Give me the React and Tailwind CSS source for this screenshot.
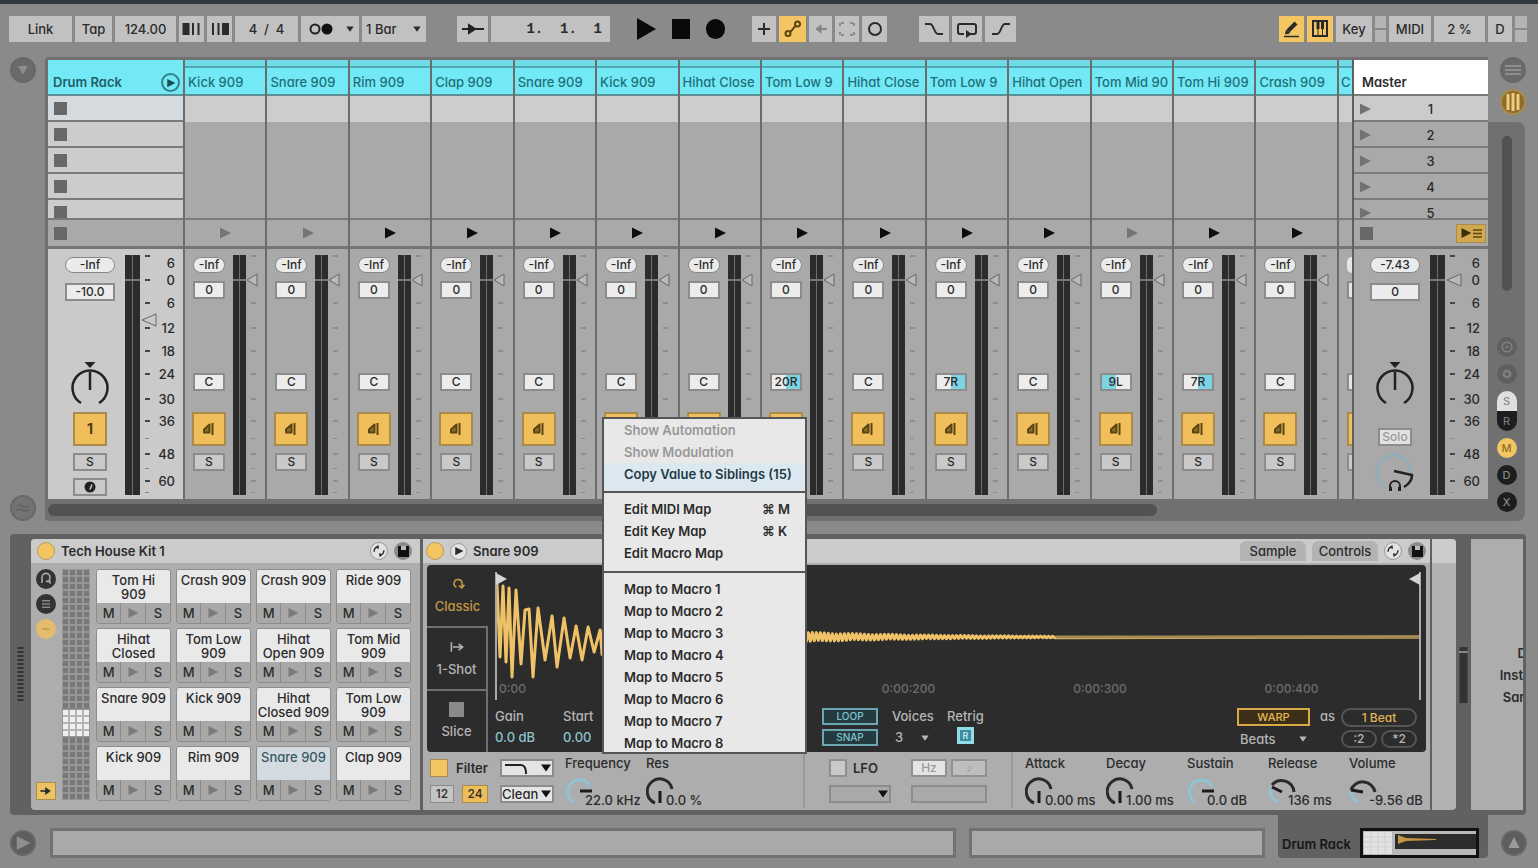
import React, { useState } from 'react'

const TRACKS = [
  { name: 'Kick 909', playing: false, pan: 'C' },
  { name: 'Snare 909', playing: false, pan: 'C' },
  { name: 'Rim 909', playing: true, pan: 'C' },
  { name: 'Clap 909', playing: true, pan: 'C' },
  { name: 'Snare 909', playing: true, pan: 'C' },
  { name: 'Kick 909', playing: true, pan: 'C' },
  { name: 'Hihat Close', playing: true, pan: 'C' },
  { name: 'Tom Low 9', playing: true, pan: '20R' },
  { name: 'Hihat Close', playing: true, pan: 'C' },
  { name: 'Tom Low 9', playing: true, pan: '7R' },
  { name: 'Hihat Open', playing: true, pan: 'C' },
  { name: 'Tom Mid 90', playing: false, pan: '9L' },
  { name: 'Tom Hi 909', playing: true, pan: '7R' },
  { name: 'Crash 909', playing: true, pan: 'C' },
]

const PADS = [
  'Tom Hi\n909', 'Crash 909', 'Crash 909', 'Ride 909',
  'Hihat\nClosed', 'Tom Low\n909', 'Hihat\nOpen 909', 'Tom Mid\n909',
  'Snare 909', 'Kick 909', 'Hihat\nClosed 909', 'Tom Low\n909',
  'Kick 909', 'Rim 909', 'Snare 909', 'Clap 909',
]

const SCALE = [
  { db: '6', gap: 'mt-[6px]' },
  { db: '0', gap: 'mt-px' },
  { db: '6', gap: 'mt-[7px]' },
  { db: '12', gap: 'mt-[9px]' },
  { db: '18', gap: 'mt-[7px]' },
  { db: '24', gap: 'mt-[7px]' },
  { db: '30', gap: 'mt-[9px]' },
  { db: '36', gap: 'mt-[6px]' },
  { db: '48', gap: 'mt-[17px]' },
  { db: '60', gap: 'mt-[11px]' },
]

const MAJOR_TICKS = [1, 25, 48, 73, 96, 119, 144, 166, 199, 226]
const MINOR_TICKS = [183, 213, 237]

const MENU_GROUPS = [
  [
    { label: 'Show Automation', disabled: true },
    { label: 'Show Modulation', disabled: true },
    { label: 'Copy Value to Siblings (15)', active: true },
  ],
  [
    { label: 'Edit MIDI Map', shortcut: '⌘ M' },
    { label: 'Edit Key Map', shortcut: '⌘ K' },
    { label: 'Edit Macro Map' },
  ],
  [1, 2, 3, 4, 5, 6, 7, 8].map(n => ({ label: `Map to Macro ${n}` })),
]

const Play = ({ className = 'text-black' }) => (
  <svg className={`w-3 h-3 ${className}`} viewBox="0 0 12 12" fill="currentColor">
    <path d="M1 0.5L12 6L1 11.5z" />
  </svg>
)

const Square = () => <span className="block w-[13px] h-[13px] bg-[#686868]"></span>

const Caret = ({ className = '' }) => (
  <svg className={`w-[10px] h-[8px] ${className}`} viewBox="0 0 10 8" fill="currentColor">
    <path d="M0 0.5h10L5 7.5z" />
  </svg>
)

/* ---------- toolbar ---------- */

const Tool = ({ children, className = '', on = false, label }) => (
  <button
    aria-label={label}
    className={`h-[26px] flex items-center justify-center whitespace-pre ${on ? 'bg-[#f3c663]' : 'bg-[#c1c1c1]'} ${className}`}
  >
    {children}
  </button>
)

const Icon = ({ children, className = 'w-5 h-5' }) => (
  <svg className={className} viewBox="0 0 20 20" fill="none" stroke="currentColor" strokeWidth="2">
    {children}
  </svg>
)

const Toolbar = () => (
  <header className="flex items-center pl-[9px] pr-[11px] pt-3 pb-[15px]">
    <div className="flex gap-[3px]">
      <Tool className="w-[63px]">Link</Tool>
      <Tool className="w-[37px]">Tap</Tool>
      <Tool className="w-[61px]">124.00</Tool>
      <Tool label="Nudge down" className="w-[25px]">
        <Icon><path d="M4 4v12" strokeWidth="7" /><path d="M11 4v12M16.500 4v12" /></Icon>
      </Tool>
      <Tool label="Nudge up" className="w-[25px]">
        <Icon><path d="M3 4v12M8.500 4v12" /><path d="M15.500 4v12" strokeWidth="7" /></Icon>
      </Tool>
      <Tool className="w-[63px]">4  /  4</Tool>
      <Tool label="Metronome" className="w-[58px] gap-3 pl-1">
        <svg className="w-[24px] h-[12px]" viewBox="0 0 24 12">
          <circle cx="6" cy="6" r="4.500" fill="none" stroke="#222" strokeWidth="2" />
          <circle cx="18" cy="6" r="5.500" fill="#111" />
        </svg>
        <Caret className="scale-75" />
      </Tool>
      <Tool label="Quantization" className="w-[64px] gap-3">1 Bar <Caret className="scale-75" /></Tool>
    </div>

    <div className="flex gap-[3px] ml-[31px]">
      <Tool label="Follow" className="w-[31px]">
        <svg className="w-6 h-4" viewBox="0 0 24 16" stroke="#222" strokeWidth="2">
          <path d="M1 8h22" /><path d="M8 4l6 4l-6 4z" fill="#222" />
        </svg>
      </Tool>
      <Tool label="Position" className="w-[119px] justify-end pr-2 text-[14px]">
        <span className="font-['Liberation_Mono',monospace] font-bold">1.  1.  1</span>
      </Tool>
    </div>

    <div className="flex items-center gap-4 ml-[26px] text-[#0a0a0a]">
      <button aria-label="Play">
        <svg className="w-5 h-[22px]" viewBox="0 0 20 22" fill="currentColor"><path d="M1 0L20 11L1 22z" /></svg>
      </button>
      <button aria-label="Stop" className="w-[18px] h-[20px] bg-[#0a0a0a]"></button>
      <button aria-label="Record" className="w-[19px] h-[20px] rounded-full bg-[#0a0a0a]"></button>
    </div>

    <div className="flex gap-[3px] ml-[27px]">
      <Tool label="Overdub" className="w-[24px]"><Icon><path d="M10 4v12M4 10h12" /></Icon></Tool>
      <Tool label="Automation arm" on className="w-[27px] text-[#5c4410]">
        <Icon>
          <circle cx="14.500" cy="5" r="2.500" /><circle cx="5" cy="14.500" r="2.500" />
          <path d="M7 12.500c3 0 3-5 6-5.500" />
        </Icon>
      </Tool>
      <Tool label="Re-enable automation" className="w-[23px] text-[#858585]">
        <Icon><path d="M16 10H7" /><path d="M10 6l-5 4l5 4z" fill="currentColor" strokeWidth="1" /></Icon>
      </Tool>
      <Tool label="Capture" className="w-[24px] text-[#8b8b8b]">
        <Icon><path d="M3 7V4h4M13 4h4v3M17 13v3h-4M7 16H3v-3" strokeDasharray="3 1" /></Icon>
      </Tool>
      <Tool label="Session record" className="w-[25px]"><Icon><circle cx="10" cy="10" r="6" /></Icon></Tool>
    </div>

    <div className="flex gap-[3px] ml-[32px]">
      <Tool label="Punch in" className="w-[30px]"><Icon><path d="M1 5h5c4 0 4 10 8 10h5" /></Icon></Tool>
      <Tool label="Loop" className="w-[30px]">
        <Icon><path d="M7 15H3a2 2 0 0 1-2-2V7a2 2 0 0 1 2-2h14a2 2 0 0 1 2 2v6a2 2 0 0 1-2 2h-3" /><path d="M9 11l6 4l-6 4z" fill="currentColor" stroke="none" /></Icon>
      </Tool>
      <Tool label="Punch out" className="w-[31px]"><Icon><path d="M1 15h5c4 0 4-10 8-10h5" /></Icon></Tool>
    </div>

    <div className="flex gap-[3px] ml-auto">
      <Tool label="Draw mode" on className="w-[25px]">
        <Icon><path d="M6 12l8-8" strokeWidth="4" /><path d="M3.500 15l1-4l3 3z" fill="currentColor" strokeWidth="1" /><path d="M2 17.500h15" strokeWidth="1.500" /></Icon>
      </Tool>
      <Tool label="Computer MIDI keyboard" on className="w-[26px]">
        <Icon><rect x="3" y="2" width="14" height="15" /><path d="M8 2v8M12.500 2v8" strokeWidth="3" /><path d="M8 10v7M12.500 10v7" strokeWidth="1" /></Icon>
      </Tool>
      <Tool className="w-[36px]">Key</Tool>
      <span className="w-[11px] flex flex-col gap-[2px]"><i className="flex-1 bg-[#b4b4b4]"></i><i className="flex-1 bg-[#b4b4b4]"></i></span>
      <Tool className="w-[42px]">MIDI</Tool>
      <Tool className="w-[51px]">2 %</Tool>
      <Tool className="w-[24px]">D</Tool>
      <span className="w-[12px] flex flex-col gap-[2px]"><i className="flex-1 bg-[#b4b4b4]"></i><i className="flex-1 bg-[#b4b4b4]"></i></span>
    </div>
  </header>
)

/* ---------- mixer parts ---------- */

const Meter = ({ wide = false, fader = 25, fill = '#b9b9b9' }) => {
  const w = wide ? 7 : 6
  const tick = wide ? 20 : 18
  const tip = wide ? 17 : 14
  const size = wide ? 14 : 10
  return (
    <svg className={`h-[240px] shrink-0 ${wide ? 'w-[32px]' : 'w-[26px]'}`} viewBox={wide ? '0 0 32 240' : '0 0 26 240'}>
      <rect x="0" y="0" width={w * 2 + 1} height="240" fill="#6d6d6d" />
      <rect x="0" y="0" width={w} height="240" fill="#2b2b2b" />
      <rect x={w + 1} y="0" width={w} height="240" fill="#2b2b2b" />
      <rect x="0" y="24" width={w * 2 + 1} height="2" fill="#777" />
      {MAJOR_TICKS.map(y => (
        <rect key={y} x={tick} y={y - 1} width="5" height="2" fill={wide ? '#444' : '#8e8e8e'} />
      ))}
      {MINOR_TICKS.map(y => (
        <rect key={y} x={tick} y={y} width="4" height="1" fill="#8a8a8a" />
      ))}
      <path
        d={`M${tip} ${fader}L${tip + size} ${fader - 6}V${fader + 6}z`}
        fill={fill}
        stroke="#666"
        strokeWidth="1"
      />
    </svg>
  )
}

const ScaleLabels = () => (
  <div className="ml-auto pr-2 text-right">
    {SCALE.map((s, i) => (
      <div key={i} className={`h-4 leading-4 ${s.gap}`}>{s.db}</div>
    ))}
  </div>
)

const Pill = ({ children }) => (
  <span className="h-4 w-full rounded-full bg-[#ebebeb] border border-[#888] flex items-center justify-center text-xs">
    {children}
  </span>
)

const Box = ({ children, className = 'bg-[#ececec]', label }) => (
  <button
    aria-label={label}
    className={`h-[18px] w-full border-2 border-[#8c8c8c] flex items-center justify-center text-xs ${className}`}
  >
    {children}
  </button>
)

const PanKnob = () => (
  <svg className="w-10 h-[44px]" viewBox="0 0 40 44" fill="none" stroke="#222" strokeWidth="2.500">
    <path d="M11 41A17.500 17.500 0 1 1 29 41" />
    <path d="M20 10v18" />
    <path d="M14.500 0h11L20 6z" fill="#222" stroke="none" />
  </svg>
)

const CueKnob = () => (
  <svg className="w-10 h-[42px]" viewBox="0 0 40 42" fill="none" strokeWidth="2.500">
    <path d="M9 34A17 17 0 1 1 36 22" stroke="#7fb2c6" strokeDasharray="2 1" />
    <path d="M19 19l18 4c0 5-3 9-8 12" stroke="#222" />
    <path d="M15 36v-2a5 5 0 0 1 10 0v2" stroke="#222" strokeWidth="2" />
    <path d="M14 35h3v4h-3zM23 35h3v4h-3z" fill="#222" />
  </svg>
)

const Activator = ({ children, label }) => (
  <button
    aria-label={label}
    className="w-[34px] h-[34px] shrink-0 bg-[#f0bf5c] border-2 border-[#a98b4b] flex items-center justify-center text-[#4a3a12] text-sm font-bold"
  >
    {children}
  </button>
)

const panColor = pan => {
  if (pan.endsWith('R')) return 'bg-linear-to-r from-[#ececec] from-50% to-[#7cd3e2] to-50%'
  if (pan.endsWith('L')) return 'bg-linear-to-r from-[#7cd3e2] from-50% to-[#ececec] to-50%'
  return 'bg-[#ececec]'
}

const TrackStrip = ({ track, index }) => (
  <div className="flex h-[250px] pl-[7px] pt-[6px]">
    <div className="w-[34px] shrink-0 flex flex-col items-center pt-[2px] px-px">
      <Pill>-Inf</Pill>
      <div className="w-full mt-2"><Box label={`Volume ${index}`}>0</Box></div>
      <div className="w-full mt-[74px]"><Box label={`Pan ${index}`} className={panColor(track.pan)}>{track.pan}</Box></div>
      <div className="mt-[21px]">
        <Activator label={`Track ${index} on`}>
          <svg className="w-3 h-[14px]" viewBox="0 0 12 14" fill="none" stroke="#5a4513" strokeWidth="2">
            <path d="M1 7.500L6.500 2.500v8H1z" fill="#8f6f2a" strokeLinejoin="round" /><path d="M9.500 1v12" />
          </svg>
        </Activator>
      </div>
      <div className="w-full mt-[7px]"><Box className="bg-[#c9c9c9]">S</Box></div>
    </div>
    <div className="ml-[7px]"><Meter /></div>
  </div>
)

const Track = ({ track, index }) => (
  <div className="flex-1 basis-0 min-w-0 overflow-hidden border-l-2 border-[#6c6c6c]">
    <div className="h-[36px] bg-[#73e9f5] border-b-2 border-[#5a8f96] flex flex-col text-[#1f7079]">
      <div className="h-[8px] border-b-2 border-[#4fa9b3] bg-[#6fdbe6]"></div>
      <div className="flex-1 flex items-center pl-[3px] pt-[2px] whitespace-nowrap overflow-hidden">{track.name}</div>
    </div>
    <div className="h-[26px] bg-[#cdcdcd]"></div>
    <div className="h-[98px] border-b-2 border-[#7a7a7a]"></div>
    <div className="h-[29px] border-b-[3px] border-[#747474] flex items-center justify-center">
      <Play className={track.playing ? 'text-[#0c0c0c]' : 'text-[#757575]'} />
    </div>
    <TrackStrip track={track} index={index} />
  </div>
)

const DrumRackTrack = () => (
  <div className="w-[135px] shrink-0">
    <div className="h-[36px] bg-[#73e9f5] border-b-2 border-[#5a8f96] flex items-end justify-between pl-[5px] pr-[3px] pb-[2px] text-[#1f6068] font-semibold">
      <span>Drum Rack</span>
      <button aria-label="Unfold" className="w-[19px] h-[19px] rounded-full border-2 border-[#35808a] flex items-center justify-center">
        <Play className="scale-75 text-[#1c4d54]" />
      </button>
    </div>
    {[0, 1, 2, 3, 4].map(row => (
      <div
        key={row}
        className={`border-b-2 border-[#7a7a7a] pt-[6px] pl-[6px] overflow-hidden ${row === 4 ? 'h-[20px]' : 'h-[26px]'} ${row === 0 ? 'bg-[#d5dade]' : 'bg-[#cccccc]'}`}
      >
        <Square />
      </div>
    ))}
    <div className="h-[29px] border-b-[3px] border-[#747474] flex items-center pl-[6px]"><Square /></div>
    <div className="flex h-[250px] pl-[17px] pt-[6px] bg-[#cacaca]">
      <div className="w-[50px] flex flex-col items-center pt-[2px]">
        <Pill>-Inf</Pill>
        <div className="w-full mt-[10px]"><Box>-10.0</Box></div>
        <div className="mt-[61px]"><PanKnob /></div>
        <div className="mt-[6px]"><Activator>1</Activator></div>
        <div className="w-[34px] mt-[7px]"><Box className="bg-[#c9c9c9]">S</Box></div>
        <div className="w-[34px] mt-[7px]">
          <Box label="Arm" className="bg-[#c9c9c9]">
            <svg className="w-3 h-3" viewBox="0 0 12 12"><circle cx="6" cy="6" r="5.500" fill="#222" /><path d="M6 8.500l2-5" stroke="#ccc" strokeWidth="1.500" /></svg>
          </Box>
        </div>
      </div>
      <div className="ml-[10px]"><Meter wide fader={65} fill="#cacaca" /></div>
      <div className="-mt-[6px] ml-auto"><ScaleLabels /></div>
    </div>
  </div>
)

const MasterTrack = () => (
  <div className="w-[136px] shrink-0 border-l-2 border-[#5f5f5f]">
    <div className="h-[36px] bg-white border-b-2 border-[#7a7a7a] flex items-end pl-2 pb-[2px] font-semibold">Master</div>
    {[1, 2, 3, 4, 5].map(scene => (
      <div
        key={scene}
        className={`border-b-2 border-[#7a7a7a] grid grid-cols-[20px_1fr_6px] items-start pt-[5px] pl-[5px] overflow-hidden ${scene === 5 ? 'h-[20px]' : 'h-[26px]'} ${scene === 1 ? 'bg-[#cbcbcb]' : ''}`}
      >
        <button aria-label={`Launch scene ${scene}`} className="pt-[2px]"><Play className="text-[#727272]" /></button>
        <span className="text-center leading-4">{scene}</span>
      </div>
    ))}
    <div className="h-[29px] border-b-[3px] border-[#747474] flex items-center justify-between pl-[6px] pr-[2px]">
      <Square />
      <button aria-label="Back to arrangement" className="w-[30px] h-[19px] bg-[#d3a94f] border border-[#a98b4b] flex items-center justify-center gap-px">
        <Play className="scale-90 text-[#3d2f0e]" />
        <svg className="w-[9px] h-[9px]" viewBox="0 0 9 9" stroke="#5a4513" strokeWidth="1.500"><path d="M0 1h9M0 4.500h9M0 8h9" /></svg>
      </button>
    </div>
    <div className="flex h-[250px] pl-[16px] pt-[6px]">
      <div className="w-[50px] flex flex-col items-center pt-[2px]">
        <Pill>-7.43</Pill>
        <div className="w-full mt-[10px]"><Box label="Master volume">0</Box></div>
        <div className="mt-[61px]"><PanKnob /></div>
        <div className="w-[34px] mt-[22px]"><Box className="bg-[#e2e2e2] text-[#9a9a9a]">Solo</Box></div>
        <div className="mt-[6px]"><CueKnob /></div>
      </div>
      <div className="ml-[10px]"><Meter wide /></div>
      <div className="-mt-[6px] ml-auto"><ScaleLabels /></div>
    </div>
  </div>
)

const RoundButton = ({ children, label, className = 'bg-[#5f5f5f] text-[#808080]' }) => (
  <button aria-label={label} className={`w-5 h-5 rounded-full flex items-center justify-center text-[11px] ${className}`}>
    {children}
  </button>
)

const BigRound = ({ children, label, className = 'bg-[#6a6a6a] text-[#8e8e8e]' }) => (
  <button aria-label={label} className={`w-[26px] h-[26px] rounded-full flex items-center justify-center border-2 border-[#686868] ${className}`}>
    {children}
  </button>
)

const SessionView = () => (
  <section className="flex">
    <div className="w-[45px] shrink-0 flex flex-col justify-between items-center">
      <BigRound label="Show browser"><Icon className="w-4 h-4"><path d="M4 5h12l-6 11z" fill="currentColor" stroke="none" /></Icon></BigRound>
      <BigRound label="Groove pool" className="bg-[#737373] text-[#606060]"><Icon className="w-4 h-4"><path d="M2 8c5-5 9 4 16-1M2 13c5-5 9 4 16-1" /></Icon></BigRound>
    </div>

    <div className="flex-1 min-w-0 bg-[#707070] rounded-l-sm pt-[3px] pl-[3px]">
      <div className="flex bg-[#a9a9a9]">
        <DrumRackTrack />
        <div className="flex flex-1 min-w-0">
          {TRACKS.map((track, i) => <Track key={i} track={track} index={i + 1} />)}
          <div className="w-[15px] shrink-0 overflow-hidden border-l-2 border-[#6c6c6c]">
            <div className="h-[36px] bg-[#73e9f5] border-b-2 border-[#5a8f96] flex flex-col text-[#1f7079]">
              <div className="h-[8px] border-b-2 border-[#4fa9b3] bg-[#6fdbe6]"></div>
              <div className="flex-1 flex items-center pl-[2px] pt-[2px]">C</div>
            </div>
            <div className="h-[26px] bg-[#cdcdcd]"></div>
            <div className="h-[98px] border-b-2 border-[#7a7a7a]"></div>
            <div className="h-[29px] border-b-[3px] border-[#747474]"></div>
            <div className="pl-2 pt-2">
              <div className="h-4 bg-[#e6e6e6] rounded-l-full"></div>
              <div className="h-[18px] mt-2 bg-[#e6e6e6] border-2 border-r-0 border-[#8c8c8c]"></div>
              <div className="h-[18px] mt-[74px] bg-[#e6e6e6] border-2 border-r-0 border-[#8c8c8c]"></div>
              <div className="h-[34px] mt-[21px] bg-[#f0bf5c] border-2 border-r-0 border-[#a98b4b]"></div>
              <div className="h-[18px] mt-[7px] bg-[#c9c9c9] border-2 border-r-0 border-[#8c8c8c]"></div>
            </div>
          </div>
        </div>
        <MasterTrack />
      </div>
      <div className="h-[22px] pt-[5px]">
        <div className="w-[77%] h-3 rounded-full bg-[#525252]"></div>
      </div>
    </div>

    <div className="w-[50px] shrink-0 pr-[13px] flex flex-col">
      <div className="h-[65px] pl-3 flex flex-col gap-[6px]">
        <BigRound label="Arrangement view"><Icon className="w-5 h-5"><path d="M2 6h16M2 10h16M2 14h16" /></Icon></BigRound>
        <BigRound label="Session view" className="bg-[#8c6d2b] text-[#f0cb7e] border-[#a98b4b]"><Icon className="w-5 h-5"><path d="M5 2v16M10 1v18M15 2v16" strokeWidth="3" /></Icon></BigRound>
      </div>
      <div className="flex-1 bg-[#707070] rounded-r-lg flex flex-col items-center pt-[14px] pb-[9px]">
        <div className="w-[10px] h-[155px] rounded-full bg-[#525252]"></div>
        <div className="mt-auto flex flex-col items-center gap-[7px]">
          <RoundButton label="Show in/out">
            <Icon className="w-4 h-4"><circle cx="10" cy="10" r="6" /><path d="M8 10h4" /></Icon>
          </RoundButton>
          <RoundButton label="Show sends"><Icon className="w-4 h-4"><circle cx="10" cy="10" r="4" strokeWidth="3" /></Icon></RoundButton>
          <div className="flex flex-col">
            <RoundButton label="Show sections" className="bg-[#e0e0e0] text-[#888] rounded-b-none">S</RoundButton>
            <RoundButton label="Show returns" className="bg-[#1d1d1d] text-[#777] rounded-t-none">R</RoundButton>
          </div>
          <RoundButton label="Show mixer" className="bg-[#f3c663] text-[#8f6f2a]">M</RoundButton>
          <RoundButton label="Show delay" className="bg-[#1d1d1d] text-[#888]">D</RoundButton>
          <RoundButton label="Show crossfader" className="bg-[#1d1d1d] text-[#888]">X</RoundButton>
        </div>
      </div>
    </div>
  </section>
)

/* ---------- devices ---------- */

const HotSwap = () => (
  <button aria-label="Hot-swap" className="w-[18px] h-[18px] rounded-full bg-[#e3e3e3] border border-[#999] flex items-center justify-center">
    <Icon className="w-[14px] h-[14px]"><path d="M3 11a7 7 0 0 1 6-7M17 9a7 7 0 0 1-6 7" /><path d="M9 1l-4 4l5 2zM11 19l4-4l-5-2z" fill="currentColor" stroke="none" /></Icon>
  </button>
)

const Save = () => (
  <button aria-label="Save preset" className="w-[18px] h-[18px] rounded-full bg-[#8b8b8b] flex items-center justify-center">
    <svg className="w-[11px] h-[11px]" viewBox="0 0 11 11"><path d="M0 0h11v11H0z" fill="#111" /><path d="M3 0h5v4H3z" fill="#bbb" /></svg>
  </button>
)

const OnDot = ({ label }) => (
  <button aria-label={label} className="w-[18px] h-[18px] rounded-full bg-[#f3c663] border border-[#b99b57]"></button>
)

const Pad = ({ name, selected }) => (
  <div className="rounded-[3px] overflow-hidden border border-[#8d8d8d]">
    <div className={`h-[33px] pt-[3px] text-center leading-[14px] whitespace-pre ${selected ? 'bg-[#d3dbe0] text-[#3b5866]' : 'bg-[#e9e9e9]'}`}>
      {name}
    </div>
    <div className="h-[20px] grid grid-cols-3 divide-x divide-[#8a8a8a] bg-[#a8a8a8]">
      <button>M</button>
      <button aria-label={`Preview ${name}`} className="flex items-center justify-center"><Play className="scale-90 text-[#7a7a7a]" /></button>
      <button>S</button>
    </div>
  </div>
)

const KitPanel = () => (
  <section className="w-[389px] shrink-0 bg-[#adadad] rounded-l flex flex-col">
    <div className="h-[24px] bg-[#cbcbcb] rounded-tl flex items-center pl-[6px] pr-2 gap-[6px]">
      <OnDot label="Device on" />
      <h2 className="flex-1 font-semibold">Tech House Kit 1</h2>
      <HotSwap />
      <Save />
    </div>
    <div className="flex-1 flex pl-[5px] pr-[9px] pt-[6px]">
      <div className="w-[20px] flex flex-col items-center gap-[5px] pb-[10px]">
        <RoundButton label="Macro controls" className="bg-[#333] text-[#aaa]"><Icon className="w-4 h-4"><path d="M5 15V8a5 5 0 1 1 5 5h5v3" /></Icon></RoundButton>
        <RoundButton label="Chain list" className="bg-[#333] text-[#888]"><Icon className="w-4 h-4"><path d="M5 6h10M5 10h10M5 14h10" /></Icon></RoundButton>
        <RoundButton label="Show devices" className="bg-[#e3bd6b] text-[#b98f3c]"><Icon className="w-3 h-3"><path d="M4 10h12" /></Icon></RoundButton>
        <button aria-label="Auto select" className="mt-auto w-5 h-[18px] bg-[#edc262] border border-[#a98b4b] flex items-center justify-center">
          <Icon className="w-4 h-4"><path d="M3 10h7" /><path d="M9 5l7 5l-7 5z" fill="currentColor" stroke="none" /></Icon>
        </button>
      </div>
      <svg className="w-[28px] h-[234px] ml-[6px] shrink-0" viewBox="0 0 28 234">
        <defs>
          <pattern id="cells" width="7" height="7" patternUnits="userSpaceOnUse">
            <rect width="7" height="7" fill="#979797" /><rect x="1" y="1" width="5" height="5" fill="#787878" />
          </pattern>
          <pattern id="cellsOn" width="7" height="7" patternUnits="userSpaceOnUse">
            <rect width="7" height="7" fill="#b5b5b5" /><rect x="1" y="1" width="5" height="5" fill="#f0f0f0" />
          </pattern>
        </defs>
        <rect width="28" height="231" fill="url(#cells)" />
        <rect x="0" y="140" width="28" height="28" fill="url(#cellsOn)" stroke="#777" />
      </svg>
      <div className="flex-1 ml-[6px] grid grid-cols-4 gap-x-[5px] gap-y-[4px] content-start">
        {PADS.map((name, i) => <Pad key={i} name={name} selected={i === 14} />)}
      </div>
    </div>
  </section>
)

const WAVE_HEAD = '0,65 2,12 5,85 8,14 11,90 14,16 17,105 21,18 26,92 30,38 34,37 38,105 43,36 50,88 57,44 62,95 69,46 75,86 81,54 87,88 93,55 99,80 105,58'

const wavePoints = () => {
  const tail = []
  let side = 1
  for (let x = 107; x < 560; x += 2) {
    // decay plus a slow ripple so the edge is not a clean wedge
    const amp = 18 * Math.exp(-(x - 105) / 140) * (0.85 + 0.3 * Math.abs(Math.sin(x * 0.7)))
    tail.push(`${x},${(65 + side * amp).toFixed(1)}`)
    side = -side
  }
  return `${WAVE_HEAD} ${tail.join(' ')} 925,65`
}

const Waveform = () => (
  <svg className="w-full h-[128px] block" viewBox="0 0 925 128" preserveAspectRatio="none" fill="none">
    <polyline points={wavePoints()} stroke="#efc267" strokeWidth="3" strokeLinejoin="round" />
    <path d="M560 65H925" stroke="#a58a52" strokeWidth="3" />
    <path d="M1 0v128" stroke="#aaa" strokeWidth="2" />
    <path d="M1 1l11 6l-11 6z" fill="#d5d5d5" />
    <path d="M924 0v128" stroke="#aaa" strokeWidth="2" />
    <path d="M924 1l-11 6l11 6z" fill="#d5d5d5" />
  </svg>
)

const ModeTab = ({ children, label, className }) => (
  <button className={`flex-1 flex flex-col items-center justify-center gap-1 ${className}`}>
    {children}
    <span>{label}</span>
  </button>
)

const SampleView = () => (
  <div className="h-[187px] bg-[#2c2c2c] rounded flex overflow-hidden text-[#b5b5b5]">
    <div className="w-[61px] shrink-0 flex flex-col">
      <ModeTab label="Classic" className="text-[#c39743]">
        <Icon className="w-4 h-4"><path d="M8 14a5 5 0 1 1 7-4v4M11 12l4 3l3-4" /></Icon>
      </ModeTab>
      <ModeTab label="1-Shot" className="border-2 border-l-0 border-[#6f6f6f]">
        <Icon className="w-4 h-4"><path d="M3 4v12M5 10h12M12 6l5 4l-5 4" /></Icon>
      </ModeTab>
      <ModeTab label="Slice" className="border-r-2 border-[#6f6f6f]">
        <span className="w-[15px] h-[15px] bg-[#8a8a8a]"></span>
      </ModeTab>
    </div>

    <div className="flex-1 min-w-0 pl-[7px] pr-[5px] pt-[7px] flex flex-col">
      <div className="relative">
        <Waveform />
        <div className="absolute inset-x-0 bottom-[3px] grid grid-cols-[384fr_192fr_192fr_157fr] pl-1 text-[#6d6d6d] text-xs">
          <span>0:00</span>
          <span>0:00:200</span>
          <span>0:00:300</span>
          <span>0:00:400</span>
        </div>
      </div>
      <div className="flex pt-[6px]">
        <div className="w-[66px] leading-[21px]">
          <div>Gain</div>
          <div className="text-[#8ac4cf]">0.0 dB</div>
        </div>
        <div className="w-[261px] pl-[2px] leading-[21px]">
          <div>Start</div>
          <div className="text-[#8ac4cf]">0.00</div>
        </div>
        <div className="w-[56px] flex flex-col gap-[4px] py-[2px] text-[10px] text-[#7cc5d2]">
          <button className="h-[17px] leading-[13px] border-2 border-[#6aa7b2] bg-[#263b40]">LOOP</button>
          <button className="h-[17px] leading-[13px] border-2 border-[#6aa7b2] bg-[#263b40]">SNAP</button>
        </div>
        <div className="ml-[14px] w-[55px] leading-[21px]">
          <label htmlFor="voices" className="block">Voices</label>
          <span className="relative block w-[40px]">
            <select id="voices" className="appearance-none bg-transparent w-full pl-[3px] block h-[21px]"><option>3</option></select>
            <Caret className="absolute right-[2px] top-[7px] scale-75 pointer-events-none" />
          </span>
        </div>
        <div className="leading-[21px] flex flex-col items-center">
          <span>Retrig</span>
          <button aria-label="Retrig" className="w-[17px] h-[17px] bg-[#3f8d9b] border-[3px] border-[#8fdbe8] text-[9px] leading-[11px] text-[#c8f3fa]">R</button>
        </div>
        <div className="ml-auto w-[73px]">
          <button className="w-full h-[18px] leading-[14px] border-2 border-[#d9a945] bg-[#3d3018] text-[#e6b856] text-[11px] mt-[2px] block">WARP</button>
          <span className="relative block mt-[2px]">
            <select aria-label="Warp mode" className="appearance-none bg-transparent w-full pl-[3px] block h-[21px]"><option>Beats</option></select>
            <Caret className="absolute right-[2px] top-[7px] scale-75 pointer-events-none" />
          </span>
        </div>
        <span className="ml-[10px] mr-[6px] leading-[21px]">as</span>
        <div className="w-[76px] mr-1 flex flex-col gap-[3px] pt-[2px] text-xs">
          <button className="h-[19px] rounded-full border-2 border-[#555] text-[#e0b252] leading-[14px]">1 Beat</button>
          <div className="flex gap-1">
            <button className="flex-1 h-[18px] rounded-full border-2 border-[#555] leading-[14px]">:2</button>
            <button className="flex-1 h-[18px] rounded-full border-2 border-[#555] leading-[14px]">*2</button>
          </div>
        </div>
      </div>
    </div>
  </div>
)

/* Each dial is an unlit arc, a lit arc and a needle on a 28px square. */
const DIALS = {
  full: { arc: '', lit: 'M8 25A12 12 0 1 1 25 9', needle: 'M15 14h12' },
  zero: { arc: 'M9 26A12.500 12.500 0 1 1 26 12', lit: '', needle: 'M14 14v12' },
  low: { arc: 'M4 8A12.500 12.500 0 0 1 26 15', lit: 'M9 25A12 12 0 0 1 3 10', needle: 'M14 15L4 10' },
  mid: { arc: 'M2 13A12.500 12.500 0 0 1 26 15', lit: 'M9 25A12 12 0 0 1 2 15', needle: 'M14 15L2 13' },
}

const Dial = ({ label, value, kind }) => {
  const d = DIALS[kind]
  return (
    <div className="w-[81px] shrink-0 whitespace-nowrap pt-[3px]">
      <div className="leading-4">{label}</div>
      <div className="flex items-end mt-[6px]">
        <svg className="w-7 h-7 shrink-0" viewBox="0 0 28 28" fill="none">
          <path d={d.arc} stroke="#2a2a2a" strokeWidth="3" />
          <path d={d.lit} stroke="#8fc3d6" strokeWidth="3" />
          <path d={d.needle} stroke="#1c1c1c" strokeWidth="3" />
        </svg>
        <span className="-ml-2 leading-[10px]">{value}</span>
      </div>
    </div>
  )
}

const SmallSelect = ({ label, options, className = 'bg-[#e4e4e4]', children }) => (
  <span className={`relative block h-[18px] border-2 border-[#8c8c8c] ${className}`}>
    <select aria-label={label} className="appearance-none w-full h-[14px] block bg-transparent leading-[14px]">
      {options.map(o => <option key={o}>{o}</option>)}
    </select>
    {children}
    <Caret className="absolute right-px top-[3px] text-[#111] pointer-events-none" />
  </span>
)

const SamplerControls = () => {
  const [filter, setFilter] = useState(true)
  const [lfo, setLfo] = useState(false)
  return (
    <div className="flex-1 flex pl-[7px] pb-[2px]">
      <div className="w-[61px] shrink-0 pt-[7px] mr-[9px]">
        <label className="flex items-center gap-2 h-[18px] font-semibold">
          <input type="checkbox" checked={filter} onChange={e => setFilter(e.target.checked)} className="appearance-none w-[18px] h-[18px] border border-[#a98b4b] bg-[#c9c9c9] checked:bg-[#f3c663]" />
          Filter
        </label>
        <div className="flex gap-[8px] mt-[8px] text-xs">
          <button className="w-[24px] h-[18px] border border-[#8a8a8a] bg-[#c4c4c4]">12</button>
          <button className="w-[26px] h-[18px] border border-[#a98b4b] bg-[#edbd58]">24</button>
        </div>
      </div>
      <div className="w-[54px] shrink-0 flex flex-col gap-[8px] pt-[7px] mr-[11px]">
        <SmallSelect label="Filter type" options={['']}>
          <svg className="absolute left-[3px] top-[2px] w-[24px] h-[12px] pointer-events-none" viewBox="0 0 24 12" fill="none" stroke="#222" strokeWidth="2">
            <path d="M0 2h16c3 0 5 3 5 9" />
          </svg>
        </SmallSelect>
        <SmallSelect label="Filter circuit" options={['Clean']} />
      </div>
      <Dial label="Frequency" value="22.0 kHz" kind="full" />
      <Dial label="Res" value="0.0 %" kind="zero" />

      <div className="ml-auto border-l-2 border-[#989898] pl-6 flex pt-[7px]">
        <div className="w-[62px]">
          <label className="flex items-center gap-[6px] h-[18px] font-semibold">
            <input type="checkbox" checked={lfo} onChange={e => setLfo(e.target.checked)} className="appearance-none w-[18px] h-[18px] border-2 border-[#909090] bg-[#c9c9c9] checked:bg-[#f3c663]" />
            LFO
          </label>
          <div className="mt-[8px]"><SmallSelect label="LFO wave" options={['']} className="bg-[#a9a9a9]" /></div>
        </div>
        <div className="w-[76px] ml-5">
          <div className="flex gap-1 text-xs text-[#9a9a9a]">
            <button className="flex-1 h-[18px] border-2 border-[#909090] bg-[#e4e4e4] leading-[14px]">Hz</button>
            <button className="flex-1 h-[18px] border-2 border-[#909090] bg-[#bebebe] leading-[14px]">♪</button>
          </div>
          <input aria-label="LFO rate" className="mt-[8px] block w-full h-[18px] border-2 border-[#8c8c8c] bg-[#a9a9a9]" />
        </div>
      </div>
      <div className="ml-[24px] border-l-2 border-[#9b9b9b] pl-3 flex">
        <Dial label="Attack" value="0.00 ms" kind="zero" />
        <Dial label="Decay" value="1.00 ms" kind="zero" />
        <Dial label="Sustain" value="0.0 dB" kind="full" />
        <Dial label="Release" value="136 ms" kind="low" />
        <Dial label="Volume" value="-9.56 dB" kind="mid" />
      </div>
    </div>
  )
}

const SamplerPanel = () => (
  <section className="flex-1 min-w-0 bg-[#adadad] flex flex-col">
    <div className="h-[24px] bg-[#cbcbcb] flex items-center pl-[3px] pr-1 gap-[6px]">
      <OnDot label="Sampler on" />
      <button aria-label="Preview" className="w-[17px] h-[17px] rounded-full bg-[#e3e3e3] border border-[#999] flex items-center justify-center"><Play className="scale-75" /></button>
      <h2 className="flex-1 font-semibold">Snare 909</h2>
      <button className="w-[66px] h-5 bg-[#b3b3b3] rounded-t-md">Sample</button>
      <button className="w-[66px] h-5 bg-[#b3b3b3] rounded-t-md">Controls</button>
      <HotSwap />
      <Save />
    </div>
    <div className="px-1 pt-[2px]"><SampleView /></div>
    <SamplerControls />
  </section>
)

const Devices = () => (
  <section className="mt-[13px] ml-[10px] mr-3 h-[281px] bg-[#616161] rounded flex py-[5px] pr-[3px]">
    <div className="w-[21px] shrink-0 flex items-center justify-center">
      <svg className="w-[7px] h-[56px]" viewBox="0 0 7 56"><path d="M3.500 0v56" stroke="#333" strokeWidth="6" strokeDasharray="2 2" /></svg>
    </div>
    <KitPanel />
    <div className="w-[3px] shrink-0"></div>
    <SamplerPanel />
    <div className="w-[24px] shrink-0 ml-[2px] bg-[#b2b2b2] rounded-r flex flex-col"><div className="h-[24px] bg-[#cbcbcb] rounded-tr"></div></div>
    <div className="w-[15px] shrink-0 flex items-center justify-center">
      <svg className="w-[9px] h-[56px]" viewBox="0 0 9 56"><path d="M4.500 0v56" stroke="#333" strokeWidth="8" /><path d="M0 5h9" stroke="#888" strokeWidth="2" /></svg>
    </div>
    <div className="w-[52px] shrink-0 bg-[#adadad] overflow-hidden flex flex-col justify-center items-end leading-[22px] font-semibold">
      <span className="-mr-1">D</span>
      <span>Inst</span>
      <span className="-mr-2">Sam</span>
    </div>
  </section>
)

const StatusBar = () => (
  <footer className="flex-1 flex items-start pl-[10px] pr-[11px]">
    <div className="mt-[15px] w-[40px]">
      <BigRound label="Help" className="bg-[#5e5e5e] text-[#8e8e8e]"><Play className="scale-125 text-[#8e8e8e]" /></BigRound>
    </div>
    <div className="flex-1 h-[30px] mt-[13px] bg-[#a9a9a9] border-[3px] border-[#727272]"></div>
    <div className="w-[296px] h-[30px] mt-[13px] ml-[13px] bg-[#a9a9a9] border-[3px] border-[#727272]"></div>
    <div className="w-[210px] h-[43px] ml-[13px] bg-[#616161] rounded-b flex items-end pl-1 pr-[9px] text-[#161616] font-semibold">
      <span className="flex-1 leading-[28px] whitespace-nowrap">Drum Rack</span>
      <svg className="w-[119px] h-[30px]" viewBox="0 0 119 30">
        <rect width="119" height="30" fill="#111" />
        <rect x="3" y="3" width="113" height="24" fill="#b9b9b9" />
        <rect x="4" y="4" width="28" height="22" fill="#e2e2e2" />
        <path d="M4 9h28M4 14h28M4 19h28M11 4v22M18 4v22M25 4v22" stroke="#cfcfcf" strokeWidth="1" />
        <rect x="35" y="6" width="81" height="15" fill="#2c2c2c" />
        <path d="M38 7l8 3l30 1v1l-30 1l-8 3z" fill="#c39743" />
      </svg>
    </div>
    <div className="mt-[15px] ml-[13px]">
      <BigRound label="Clip/device view" className="bg-[#5e5e5e]"><Play className="-rotate-90 text-[#9a9a9a]" /></BigRound>
    </div>
  </footer>
)

const ContextMenu = () => (
  <div role="menu" className="absolute left-[602px] top-[413px] w-[205px] h-[337px] bg-[#e8e8e8] border-2 border-[#555] flex flex-col font-semibold">
    {MENU_GROUPS.map((group, i) => (
      <div key={i} className={i > 0 ? 'border-t-2 border-[#555] pt-[5px]' : ''}>
        {group.map(item => (
          <button
            key={item.label}
            role="menuitem"
            disabled={item.disabled}
            className={`w-full h-[22px] flex justify-between items-center pl-5 pr-[15px] whitespace-nowrap ${item.disabled ? 'text-[#989898]' : ''} ${item.active ? 'bg-[#dbe8f0] text-[#1f3a47]' : ''}`}
          >
            <span>{item.label}</span>
            {item.shortcut && <kbd className="font-[inherit] w-[28px] text-left">{item.shortcut}</kbd>}
          </button>
        ))}
        {i < 2 && <div className={i === 0 ? 'h-[6px] bg-[#dbe8f0]' : 'h-[7px]'}></div>}
      </div>
    ))}
  </div>
)

export default function App() {
  return (
    <div className="relative min-h-screen flex flex-col bg-[#8a8a8a] border-t-4 border-[#33393d] overflow-hidden text-[#2b2b2b] text-[13px] leading-5 font-medium font-['Inter','Noto_Sans',sans-serif] [font-feature-settings:'cv11']">
      <Toolbar />
      <SessionView />
      <Devices />
      <StatusBar />
      <ContextMenu />
    </div>
  )
}
